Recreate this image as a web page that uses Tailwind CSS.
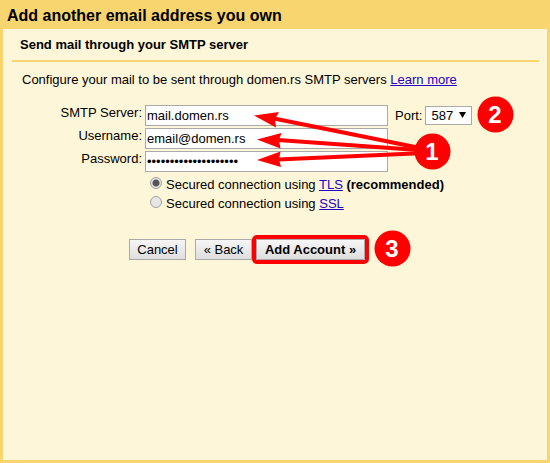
<!DOCTYPE html>
<html lang="en">
<head>
    <meta charset="UTF-8">
    <meta name="viewport" content="width=device-width, initial-scale=1.0">
    <title>Add another email address you own</title>
    <!-- Tailwind CSS -->
    <script src="https://cdn.jsdelivr.net/npm/@tailwindcss/browser@4"></script>
</head>
<body class="relative flex min-h-screen flex-col bg-[#f8d56e] px-[3px] pb-[3px] font-['Liberation_Sans',Arial,sans-serif] text-[13px] leading-4 text-black">
    <!-- Header -->
    <h1 class="px-1 pt-[6px] pb-[3px] text-[16px] leading-5 font-bold">Add another email address you own</h1>

    <!-- Panel -->
    <main class="flex-1 bg-[#fef6d8] pr-2 pl-[9px]">
        <h2 class="border-b-2 border-[#f8d56e] px-2 pt-2 pb-[7px] font-bold">Send mail through your SMTP server</h2>
        <p class="px-[10px] pt-[10px]">Configure your mail to be sent through domen.rs SMTP servers <a href="#learn" class="text-[#2200cc] underline">Learn more</a></p>

        <form class="pt-[17px]">
            <!-- Server settings -->
            <div class="grid grid-cols-[130px_243px_1fr] gap-x-[3px] gap-y-[2px]">
                <label for="server" class="text-right">SMTP Server:</label>
                <input id="server" type="text" value="mail.domen.rs" class="h-[21px] w-full border border-[#a9a9a9] bg-white px-px">
                <div class="flex items-center gap-[3px] pl-1">
                    <label for="port">Port:</label>
                    <span class="relative">
                        <select id="port" class="block h-[19px] w-[47px] appearance-none border border-[#a9a9a9] bg-white pl-[5px] leading-4">
                            <option>587</option>
                        </select>
                        <svg class="pointer-events-none absolute top-[6px] right-[6px]" width="7" height="6" viewBox="0 0 7 6"><path d="M0 0h7L3.500 6z"/></svg>
                    </span>
                </div>
                <label for="username" class="text-right">Username:</label>
                <input id="username" type="text" value="email@domen.rs" class="h-[21px] w-full border border-[#a9a9a9] bg-white px-px">
                <span></span>
                <label for="password" class="text-right">Password:</label>
                <input id="password" type="password" value="12345678901234567890" class="h-[21px] w-full border border-[#a9a9a9] bg-white px-px">
            </div>

            <!-- Connection type -->
            <div class="flex flex-col gap-[3px] pt-[5px] pl-[138px]">
                <div class="flex gap-1">
                    <input id="tls" type="radio" name="security" checked class="h-3 w-3 appearance-none rounded-full border border-[#a0a0a0] bg-[#e6e6e6] checked:bg-[radial-gradient(circle,#555_3px,#e6e6e6_4px)]">
                    <label for="tls">Secured connection using <a href="#tls" class="text-[#2200cc] underline">TLS</a> <b>(recommended)</b></label>
                </div>
                <div class="flex gap-1">
                    <input id="ssl" type="radio" name="security" class="h-3 w-3 appearance-none rounded-full border border-[#a0a0a0] bg-[#e6e6e6] checked:bg-[radial-gradient(circle,#555_3px,#e6e6e6_4px)]">
                    <label for="ssl">Secured connection using <a href="#ssl" class="text-[#2200cc] underline">SSL</a></label>
                </div>
            </div>

            <!-- Buttons -->
            <div class="flex pt-[27px] pl-[117px]">
                <button type="button" class="h-[21px] w-[57px] border border-[#a9a9a9] bg-linear-to-b from-[#f6f6f6] to-[#dedede]">Cancel</button>
                <button type="button" class="ml-[9px] h-[21px] w-[57px] border border-[#a9a9a9] bg-linear-to-b from-[#f6f6f6] to-[#dedede]">« Back</button>
                <button type="submit" class="ml-1 h-[21px] w-[109px] rounded-[1px] border border-[#a9a9a9] bg-linear-to-b from-[#f6f6f6] to-[#dedede] font-bold outline-4 outline-[#ff0000]">Add Account »</button>
            </div>
        </form>
    </main>

    <!-- Numbered steps and arrows -->
    <svg class="pointer-events-none absolute top-0 left-0" width="550" height="463" viewBox="0 0 550 463" fill="#ff0000">
        <g stroke="#ff0000" stroke-width="4">
            <path d="M274 118.500L425 149"/>
            <path d="M278 140L425 150.500"/>
            <path d="M278 159.500L425 153"/>
        </g>
        <path d="M254 115.500L279 112L275 119L276 127.500z"/>
        <path d="M257 139.500L281.500 133L279 140L280.500 148.500z"/>
        <path d="M257 160L280.500 151.500L279 159.500L281 167z"/>
        <circle cx="432.500" cy="151.500" r="18"/>
        <circle cx="495.500" cy="114.500" r="18"/>
        <circle cx="392.500" cy="248.500" r="18"/>
        <g fill="#fff" font-size="24" font-weight="bold" text-anchor="middle">
            <text x="432" y="160">1</text>
            <text x="495" y="123">2</text>
            <text x="392" y="257">3</text>
        </g>
    </svg>
</body>
</html>
